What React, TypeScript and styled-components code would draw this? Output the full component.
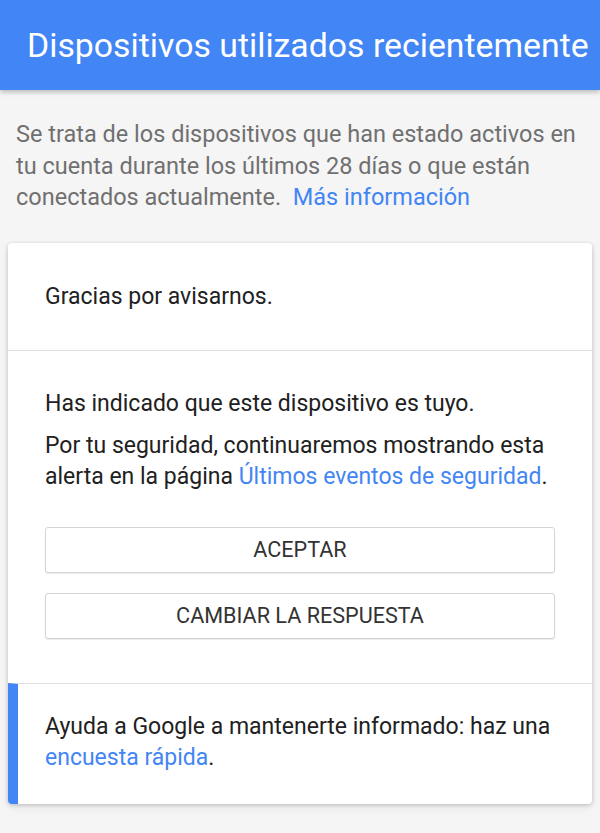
import React from "react"
import styled, { createGlobalStyle } from "styled-components"

const GlobalStyle = createGlobalStyle`
    html, body {
        margin: 0;
        padding: 0;
        background: #f5f5f5;
        font-family: Roboto, "Noto Sans", Arial, sans-serif;
    }
`

const Page = styled.div`
    width: 600px;
    min-height: 833px;
    background: #f5f5f5;
    overflow: hidden;
`

const Header = styled.header`
    height: 90px;
    background: #4285f4;
    display: flex;
    align-items: center;
    padding-left: 27px;
    box-shadow: 0 2px 5px rgba(0, 0, 0, 0.26);
    position: relative;
    h1 {
        margin: 0;
        color: #ffffff;
        font-size: 33.8px;
        font-weight: 400;
        white-space: nowrap;
    }
`

const Intro = styled.p`
    margin: 0;
    padding: 29px 16px 29px 16px;
    color: #707070;
    font-size: 23.5px;
    line-height: 31.5px;
`

const Link = styled.a`
    color: #4285f4;
    text-decoration: none;
    cursor: pointer;
`

const Card = styled.section`
    margin: 0 8px;
    background: #ffffff;
    border-radius: 4px;
    box-shadow: 0 1px 4px rgba(0, 0, 0, 0.2), 0 4px 8px rgba(0, 0, 0, 0.06);
    overflow: hidden;
`

const Section = styled.div<{ $accent?: boolean }>`
    padding: ${p => p.$accent ? "27px 30px 31px 27px" : "38px 37px"};
    border-top: 1px solid #e0e0e0;
    border-left: ${p => p.$accent ? "10px solid #4285f4" : "0"};
    &:first-child {
        border-top: 0;
    }
    p {
        margin: 0;
        color: #212121;
        font-size: 23px;
        line-height: 31px;
    }
`

const Body = styled.div`
    padding: 37px 37px 44px 37px;
    border-top: 1px solid #e0e0e0;
    display: flex;
    flex-direction: column;
    p {
        margin: 0;
        color: #212121;
        font-size: 23px;
        line-height: 31px;
    }
    p + p {
        margin-top: 11px;
    }
`

const Actions = styled.div`
    margin-top: 35px;
    display: flex;
    flex-direction: column;
    gap: 20px;
`

const Button = styled.button`
    height: 46px;
    width: 100%;
    background: #ffffff;
    border: 1px solid #d4d4d4;
    border-radius: 3px;
    box-shadow: 0 1px 1px rgba(0, 0, 0, 0.08);
    font-family: inherit;
    font-size: 21.6px;
    color: #333333;
    text-transform: uppercase;
    cursor: pointer;
`

export default function App() {
    return (
        <Page>
            <GlobalStyle />
            <Header>
                <h1>Dispositivos utilizados recientemente</h1>
            </Header>
            <Intro>
                Se trata de los dispositivos que han estado activos en tu cuenta durante los últimos 28 días o que están conectados actualmente.&nbsp; <Link>Más información</Link>
            </Intro>
            <Card>
                <Section>
                    <p>Gracias por avisarnos.</p>
                </Section>
                <Body>
                    <p>Has indicado que este dispositivo es tuyo.</p>
                    <p>
                        Por tu seguridad, continuaremos mostrando esta alerta en la página <Link>Últimos eventos de seguridad</Link>.
                    </p>
                    <Actions>
                        <Button>Aceptar</Button>
                        <Button>Cambiar la respuesta</Button>
                    </Actions>
                </Body>
                <Section $accent>
                    <p>
                        Ayuda a Google a mantenerte informado: haz una <Link>encuesta rápida</Link>.
                    </p>
                </Section>
            </Card>
        </Page>
    )
}
